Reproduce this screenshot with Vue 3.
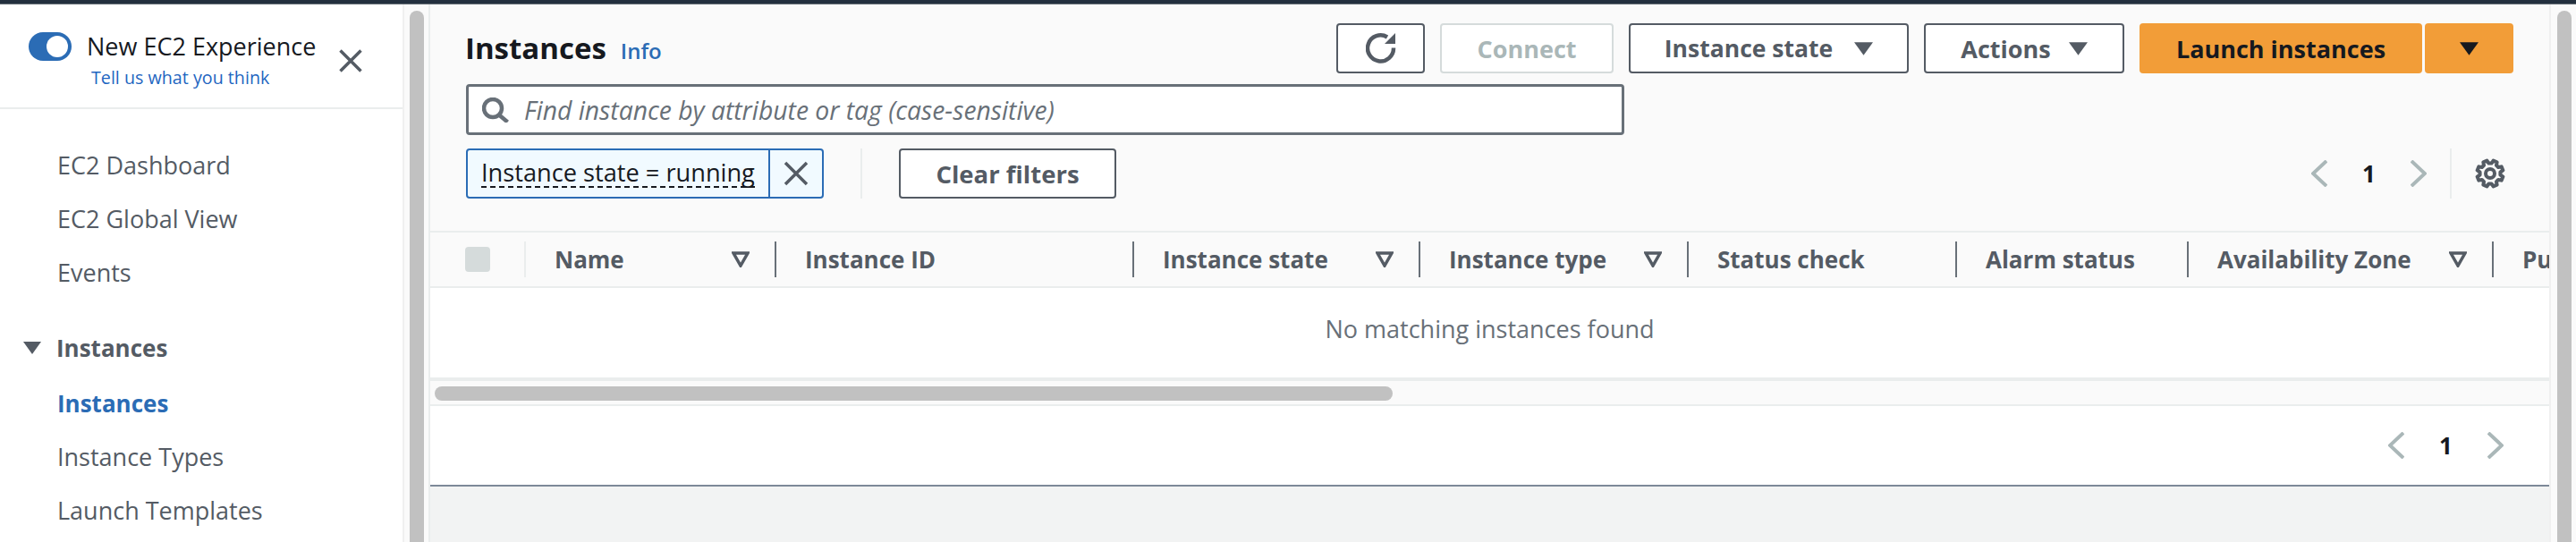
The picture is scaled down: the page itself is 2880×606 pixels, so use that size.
<template>
  <div class="page">
    <div class="top-bar"></div>
    <div class="shell">
      <aside class="sidebar">
        <div class="experience">
          <span class="toggle"><span class="knob"></span></span>
          <div class="experience-text">
            <div class="experience-title">New EC2 Experience</div>
            <a class="experience-link">Tell us what you think</a>
          </div>
          <svg class="close" viewBox="0 0 26 26" aria-hidden="true">
            <path d="M1.500 1.500 24.500 24.500M24.500 1.500 1.500 24.500" />
          </svg>
        </div>
        <nav class="nav">
          <a v-for="item in topLinks" :key="item" class="nav-link">{{ item }}</a>
          <div class="nav-section">
            <svg class="section-caret" viewBox="0 0 20 14" aria-hidden="true"><path d="M0 0h20L10 14z" /></svg>
            <span>Instances</span>
          </div>
          <a class="nav-link active">Instances</a>
          <a v-for="item in instanceLinks" :key="item" class="nav-link">{{ item }}</a>
        </nav>
      </aside>

      <div class="scroll-track side-track"><div class="scroll-thumb"></div></div>

      <main class="content">
        <section class="panel-head">
          <div class="title-row">
            <h1 class="title">Instances</h1>
            <a class="info">Info</a>
            <div class="actions">
              <button class="btn refresh" aria-label="Refresh">
                <svg viewBox="0 0 34 34" aria-hidden="true">
                  <path class="refresh-arc" d="M24 4.500A14.500 14.500 0 1 0 31 16.500" />
                  <path class="refresh-head" d="M33 0v12H21z" />
                </svg>
              </button>
              <button class="btn connect" disabled>Connect</button>
              <button class="btn state-btn">Instance state<svg class="caret" viewBox="0 0 20 14"><path d="M0 0h20L10 14z" /></svg></button>
              <button class="btn actions-btn">Actions<svg class="caret" viewBox="0 0 20 14"><path d="M0 0h20L10 14z" /></svg></button>
              <div class="launch-group">
                <button class="btn launch">Launch instances</button>
                <button class="btn launch launch-menu" aria-label="More launch options">
                  <svg class="caret" viewBox="0 0 20 14"><path d="M0 0h20L10 14z" /></svg>
                </button>
              </div>
            </div>
          </div>

          <div class="search">
            <svg class="search-icon" viewBox="0 0 30 28" aria-hidden="true">
              <circle cx="12" cy="12" r="10" />
              <path d="m19 19.500 9.500 8" />
            </svg>
            <span class="placeholder">Find instance by attribute or tag (case-sensitive)</span>
          </div>

          <div class="filter-row">
            <div class="token">
              <span class="token-label"><span>Instance state = running</span></span>
              <button class="token-remove" aria-label="Remove filter">
                <svg viewBox="0 0 28 28" aria-hidden="true"><path d="M2 2 26 26M26 2 2 26" /></svg>
              </button>
            </div>
            <span class="filter-divider"></span>
            <button class="btn clear">Clear filters</button>
            <div class="pager">
              <svg class="chevron" viewBox="0 0 18 30"><path d="M17 1 2 15l15 14" /></svg>
              <span class="page-num">1</span>
              <svg class="chevron" viewBox="0 0 18 30"><path d="m1 1 15 14L1 29" /></svg>
              <span class="pager-divider"></span>
              <svg class="gear" viewBox="0 0 34 34" aria-hidden="true">
                <path :d="gearPath" />
                <circle cx="17" cy="17" r="5" />
              </svg>
            </div>
          </div>
        </section>

        <div class="table-head">
          <div
            v-for="col in columns"
            :key="col.label"
            class="th"
            :style="{ width: col.width + 'px' }"
          >
            <span v-if="col.check" class="checkbox"></span>
            <template v-else>
              <span class="th-label">{{ col.label }}</span>
              <svg v-if="col.sort" class="sort" viewBox="0 0 20 18" aria-hidden="true"><path d="M2 2h16l-8 14z" /></svg>
            </template>
            <span class="th-sep" :class="{ faint: col.check }"></span>
          </div>
        </div>
        <div class="empty">No matching instances found</div>
        <div class="h-track"><div class="h-thumb"></div></div>
        <div class="table-foot">
          <svg class="chevron" viewBox="0 0 18 30"><path d="M17 1 2 15l15 14" /></svg>
          <span class="page-num">1</span>
          <svg class="chevron" viewBox="0 0 18 30"><path d="m1 1 15 14L1 29" /></svg>
        </div>
        <div class="lower-pane"></div>
      </main>

      <div class="scroll-track main-track"><div class="scroll-thumb"></div></div>
    </div>
  </div>
</template>

<script setup>
const topLinks = ['EC2 Dashboard', 'EC2 Global View', 'Events']
const instanceLinks = ['Instance Types', 'Launch Templates']

const columns = [
  { label: 'select', width: 107, check: true },
  { label: 'Name', width: 280, sort: true },
  { label: 'Instance ID', width: 400 },
  { label: 'Instance state', width: 320, sort: true },
  { label: 'Instance type', width: 300, sort: true },
  { label: 'Status check', width: 300 },
  { label: 'Alarm status', width: 259 },
  { label: 'Availability Zone', width: 341, sort: true },
  { label: 'Public IPv4 DNS', width: 320 }
]

// eight blunt teeth round a ring
const gearPath = (() => {
  const pts = []
  for (let i = 0; i < 8; i++) {
    const mid = (i * Math.PI) / 4 + Math.PI / 8
    const corners = [[11.5, -0.26], [14.8, -0.15], [14.8, 0.15], [11.5, 0.26]]
    corners.forEach(([r, a]) => {
      const x = 17 + r * Math.cos(mid + a)
      const y = 17 + r * Math.sin(mid + a)
      pts.push(`${x.toFixed(2)} ${y.toFixed(2)}`)
    })
  }
  return `M${pts.join('L')}Z`
})()
</script>

<style>
html,
body {
  margin: 0;
  background: #fff;
  overflow: hidden;
}
</style>

<style scoped>
.page {
  width: 2880px;
  height: 606px;
  overflow: hidden;
  display: flex;
  flex-direction: column;
  font-family: "Open Sans", "Noto Sans", sans-serif;
  color: #16191f;
}

.top-bar {
  height: 4px;
  flex: none;
  background: #232f3e;
  border-bottom: 1px solid #687078;
}

.shell {
  flex: 1;
  min-height: 0;
  display: flex;
}

/* left navigation */
.sidebar {
  width: 450px;
  flex: none;
  background: #fff;
}

.experience {
  height: 117px;
  box-sizing: border-box;
  border-bottom: 2px solid #eaeded;
  display: flex;
  align-items: flex-start;
  padding: 31px 0 0 32px;
}

.toggle {
  width: 48px;
  height: 32px;
  border-radius: 16px;
  background: #2b6cb5;
  display: flex;
  align-items: center;
  justify-content: flex-end;
  padding-right: 4px;
  box-sizing: border-box;
  flex: none;
}

.knob {
  width: 24px;
  height: 24px;
  border-radius: 50%;
  background: #fff;
}

.experience-text {
  margin-left: 17px;
  width: 282px;
  flex: none;
  padding-top: 1px;
}

.experience-title {
  font-size: 27px;
  line-height: 30px;
  white-space: nowrap;
}

.experience-link {
  display: block;
  margin: 7px 0 0 5px;
  font-size: 19.700px;
  line-height: 26px;
  color: #1f66c1;
  white-space: nowrap;
}

.close {
  width: 26px;
  height: 26px;
  margin-top: 19px;
  flex: none;
}

.close path {
  fill: none;
  stroke: #545b64;
  stroke-width: 3.500;
}

.nav {
  display: flex;
  flex-direction: column;
  padding-top: 33px;
}

.nav-link {
  height: 60px;
  line-height: 60px;
  padding-left: 64px;
  font-size: 27px;
  color: #545b64;
  white-space: nowrap;
}

.nav-link.active {
  color: #2b6cb5;
  font-weight: 700;
  font-size: 26px;
  margin-top: 2px;
}

.nav-section {
  display: flex;
  align-items: center;
  height: 60px;
  margin-top: 24px;
  padding-left: 26px;
  font-size: 26px;
  font-weight: 700;
  color: #545b64;
}

.section-caret {
  width: 20px;
  height: 14px;
  margin-right: 17px;
  fill: #545b64;
}

/* vertical scrollbars */
.scroll-track {
  width: 30px;
  flex: none;
  box-sizing: border-box;
  background: #fafafa;
  border-left: 2px solid #f0f0f0;
  border-right: 2px solid #eaeded;
  padding-top: 7px;
  display: flex;
  justify-content: center;
}

.scroll-thumb {
  width: 16px;
  height: 800px;
  background: #c1c1c1;
  border-radius: 8px;
}

.side-track {
  width: 31px;
}

.main-track {
  border-right: none;
  padding-left: 2px;
}

/* main panel */
.content {
  flex: 1;
  min-width: 0;
  display: flex;
  flex-direction: column;
  background: #fff;
  overflow: hidden;
}

.panel-head {
  height: 253px;
  flex: none;
  box-sizing: border-box;
  background: #fafafa;
  padding: 21px 40px 0;
}

.title-row {
  display: flex;
  align-items: center;
  height: 56px;
}

.title {
  margin: -1px 0 0 -1px;
  font-size: 33px;
  font-weight: 700;
  line-height: 56px;
}

.info {
  margin-left: 16px;
  font-size: 24px;
  font-weight: 600;
  color: #2b6cb5;
  padding-top: 4px;
}

.actions {
  margin-left: auto;
  display: flex;
  gap: 17px;
}

.btn {
  height: 56px;
  box-sizing: border-box;
  border: 2px solid #545b64;
  border-radius: 4px;
  background: #fff;
  color: #545b64;
  font-family: inherit;
  font-size: 27px;
  font-weight: 700;
  padding: 0;
  display: flex;
  align-items: center;
  justify-content: center;
  white-space: nowrap;
}

.refresh {
  width: 99px;
}

.refresh svg {
  width: 34px;
  height: 34px;
}

.refresh-arc {
  fill: none;
  stroke: #545b64;
  stroke-width: 4.500;
}

.refresh-head {
  fill: #545b64;
}

.connect {
  width: 194px;
  color: #aab7b8;
  border-color: #d5dbdb;
}

.state-btn {
  width: 313px;
  font-size: 26.500px;
}

.actions-btn {
  width: 224px;
}

.actions-btn .caret {
  margin-left: 20px;
}

.caret {
  width: 21px;
  height: 15px;
  margin-left: 24px;
  fill: #545b64;
  flex: none;
}

.launch-group {
  display: flex;
  gap: 3px;
}

.launch {
  width: 316px;
  background: #f29d38;
  border: none;
  color: #16191f;
}

.launch-menu {
  width: 99px;
}

.launch-menu .caret {
  margin-left: 0;
  fill: #16191f;
}

.search {
  width: 1295px;
  height: 57px;
  margin-top: 12px;
  box-sizing: border-box;
  background: #fff;
  border: 3px solid #687078;
  border-radius: 4px;
  display: flex;
  align-items: center;
  padding-left: 15px;
}

.search-icon {
  width: 30px;
  height: 28px;
  flex: none;
}

.search-icon circle,
.search-icon path {
  fill: none;
  stroke: #687078;
  stroke-width: 4.500;
}

.placeholder {
  margin-left: 17px;
  font-size: 28.300px;
  font-style: italic;
  color: #687078;
  white-space: nowrap;
}

.filter-row {
  display: flex;
  align-items: center;
  height: 56px;
  margin-top: 15px;
}

.token {
  width: 400px;
  height: 56px;
  box-sizing: border-box;
  display: flex;
  background: #f1faff;
  border: 2px solid #2b6cb5;
  border-radius: 4px;
}

.token-label {
  width: 338px;
  flex: none;
  box-sizing: border-box;
  border-right: 2px solid #2b6cb5;
  padding-left: 15px;
  display: flex;
  align-items: center;
  font-size: 27.200px;
  white-space: nowrap;
}

.token-label span {
  line-height: 30px;
  border-bottom: 2px dashed #16191f;
}

.token-remove {
  flex: 1;
  border: none;
  background: none;
  padding: 0;
  display: flex;
  align-items: center;
  justify-content: center;
}

.token-remove svg {
  width: 28px;
  height: 28px;
}

.token-remove path {
  fill: none;
  stroke: #545b64;
  stroke-width: 3.500;
}

.filter-divider {
  width: 2px;
  height: 56px;
  background: #eaeded;
  margin: 0 41px;
}

.clear {
  width: 243px;
  font-size: 27.500px;
}

.pager {
  margin-left: auto;
  margin-right: 9px;
  display: flex;
  align-items: center;
}

.chevron {
  width: 18px;
  height: 30px;
  flex: none;
}

.chevron path {
  fill: none;
  stroke: #aab7b8;
  stroke-width: 4;
}

.page-num {
  width: 93px;
  text-align: center;
  font-size: 26px;
  font-weight: 700;
  color: #16191f;
}

.pager-divider {
  width: 2px;
  height: 56px;
  background: #eaeded;
  margin: 0 26px;
}

.gear {
  width: 34px;
  height: 34px;
  flex: none;
}

.gear path,
.gear circle {
  fill: none;
  stroke: #545b64;
  stroke-width: 4;
  stroke-linejoin: round;
}

/* table */
.table-head {
  height: 64px;
  flex: none;
  box-sizing: border-box;
  display: flex;
  background: #fafafa;
  border-top: 2px solid #eaeded;
  border-bottom: 2px solid #eaeded;
  overflow: hidden;
}

.th {
  position: relative;
  flex: none;
  box-sizing: border-box;
  display: flex;
  align-items: center;
  padding-left: 32px;
  font-size: 26px;
  font-weight: 700;
  color: #545b64;
  white-space: nowrap;
}

.checkbox {
  width: 28px;
  height: 28px;
  margin-left: 7px;
  border-radius: 4px;
  background: #d5dbdb;
}

.sort {
  position: absolute;
  right: 30px;
  top: 21px;
  width: 20px;
  height: 18px;
}

.sort path {
  fill: none;
  stroke: #545b64;
  stroke-width: 3.500;
}

.th-sep {
  position: absolute;
  right: 0;
  top: 10px;
  width: 2px;
  height: 40px;
  background: #687078;
}

.th-sep.faint {
  background: #eaeded;
}

.empty {
  height: 100px;
  flex: none;
  box-sizing: border-box;
  padding-bottom: 10px;
  display: flex;
  align-items: center;
  justify-content: center;
  font-size: 27px;
  color: #687078;
}

.h-track {
  height: 32px;
  flex: none;
  box-sizing: border-box;
  background: #fafafa;
  border-top: 4px solid #eaeded;
  border-bottom: 2px solid #eaeded;
  padding: 6px 0 0 5px;
}

.h-thumb {
  width: 1071px;
  height: 16px;
  border-radius: 8px;
  background: #c1c1c1;
}

.table-foot {
  height: 88px;
  flex: none;
  box-sizing: border-box;
  display: flex;
  align-items: center;
  justify-content: flex-end;
  padding: 0 51px 0 0;
  background: #fff;
  border-bottom: 0;
}

.lower-pane {
  flex: 1;
  background: #f2f3f3;
  border-top: 2px solid #7d8998;
}
</style>
